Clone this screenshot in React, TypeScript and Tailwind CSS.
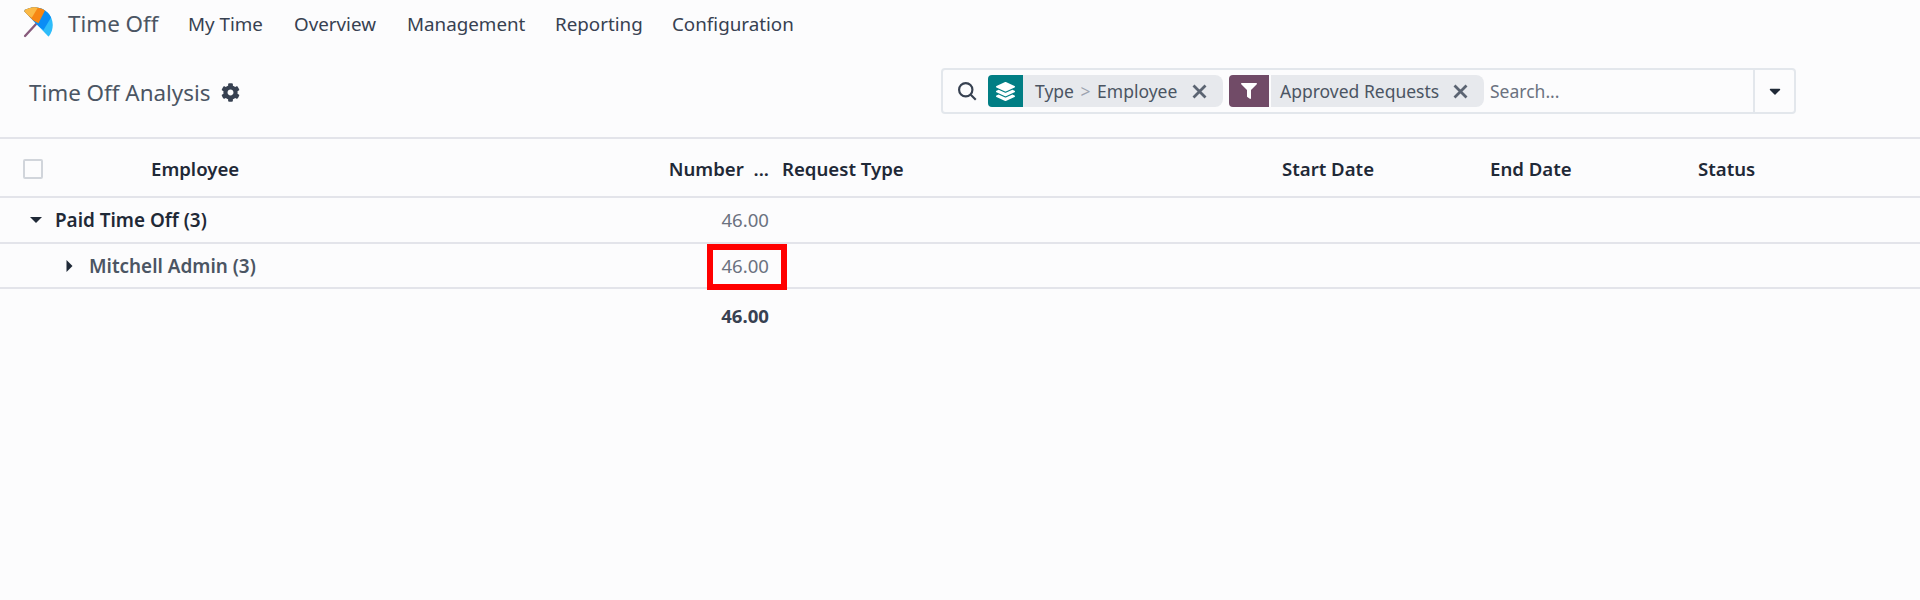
import { FaCog, FaFilter, FaLayerGroup, FaCaretDown } from "react-icons/fa";

const navItems = [
  { label: "My Time", width: "w-[106px]" },
  { label: "Overview", width: "w-[113px]" },
  { label: "Management", width: "w-[148px]" },
  { label: "Reporting", width: "w-[117px]" },
  { label: "Configuration", width: "w-[130px]" },
];

const Logo = () => (
  <svg width="37" height="37" viewBox="30 5 110 110" className="mt-[2px] shrink-0 self-start">
    <defs>
      <clipPath id="canopy">
        <path d="M42 32 A53 53 0 0 1 115 108 Z" />
      </clipPath>
    </defs>
    <path d="M82 66 L45 106" stroke="#875a7b" strokeWidth="7" strokeLinecap="round" />
    <g clipPath="url(#canopy)">
      <rect x="30" y="5" width="110" height="110" fill="#2ebcfa" />
      <path d="M30 5 H150 L100 88 L30 40 Z" fill="#0a8df5" />
      <path d="M30 5 H117 L85 68 L30 40 Z" fill="#f78613" />
      <path d="M30 5 H93 L65 52 L30 30 Z" fill="#fbb945" />
    </g>
  </svg>
);

const Caret = ({ dir }: { dir: "down" | "right" }) => (
  <svg width="12" height="12" viewBox="0 0 12 12" className="shrink-0" fill="#1f2937">
    {dir === "down" ? <path d="M0 3h12L6 9z" /> : <path d="M2.500 0v12L8.500 6z" />}
  </svg>
);

const CloseIcon = () => (
  <svg width="15" height="15" viewBox="0 0 15 15" stroke="#5b6472" strokeWidth="2.800">
    <path d="M1.500 1.500l12 12M13.500 1.500l-12 12" />
  </svg>
);

export default function App() {
  return (
    <div className="h-[600px] w-[1920px] overflow-hidden bg-[#fcfcfd] font-['Noto_Sans',sans-serif] text-[#374151]">
      {/* top nav */}
      <nav className="flex h-[48px] items-center pl-[20px]">
        <Logo />
        <span className="ml-[11px] w-[120px] text-[22.4px] text-[#4b5563]">Time Off</span>
        {navItems.map((item) => (
          <span key={item.label} className={`${item.width} text-[18.8px] text-[#374151]`}>
            {item.label}
          </span>
        ))}
      </nav>

      {/* control panel */}
      <div className="flex h-[91px] items-start border-b-2 border-[#e3e4ea] pl-[29px]">
        <div className="mt-[28px] flex w-[912px] items-center gap-[11px]">
          <span className="text-[22.4px] text-[#4b5563]">Time Off Analysis</span>
          <FaCog className="text-[19px] text-[#374151]" />
        </div>
        <div className="mt-[20px] flex h-[46px] w-[855px] items-center rounded border-2 border-[#e3e7ec] pl-[14px]">
          <svg width="20" height="20" viewBox="0 0 24 24" fill="none" stroke="#374151" strokeWidth="2.600">
            <circle cx="10.500" cy="10.500" r="8" />
            <path d="M16.500 16.500l6 6" />
          </svg>
          <div className="ml-[11px] flex flex-1 items-center gap-[6px]">
            <div className="flex h-[32px] w-[235px] items-stretch">
              <div className="flex w-[35px] items-center justify-center rounded-l bg-[#017e84]">
                <FaLayerGroup className="text-[19px] text-white" />
              </div>
              <div className="flex flex-1 items-center justify-between rounded-r-lg bg-[#e7e9ed] pl-[12px] pr-[16px] text-[17.5px] text-[#4b5563]">
                <span>
                  Type <span className="mx-[2px] text-[#9ca3af]">&gt;</span> Employee
                </span>
                <CloseIcon />
              </div>
            </div>
            <div className="flex h-[32px] w-[255px] items-stretch">
              <div className="mr-[2px] flex w-[40px] items-center justify-center rounded-l bg-[#714b67]">
                <FaFilter className="text-[16px] text-white" />
              </div>
              <div className="flex flex-1 items-center justify-between rounded-r-lg bg-[#e7e9ed] pl-[9px] pr-[16px] text-[17.5px] text-[#4b5563]">
                <span>Approved Requests</span>
                <CloseIcon />
              </div>
            </div>
            <span className="flex-1 text-[17.5px] text-[#6b7280]">Search...</span>
          </div>
          <div className="flex h-full w-[41px] items-center justify-center border-l-2 border-[#e3e7ec]">
            <FaCaretDown className="text-[18px] text-[#1f2937]" />
          </div>
        </div>
      </div>

      {/* list */}
      <div className="relative text-[18.6px]">
        <div className="flex h-[59px] items-center border-b-2 border-[#e3e4ea] pt-[3px] font-semibold text-[#1f2937]">
          <div className="w-[139px] pl-[23px]">
            <div className="h-[20px] w-[20px] rounded-[2px] border-2 border-[#d1d5db]" />
          </div>
          <div className="w-[500px] pl-[12px]">Employee</div>
          <div className="w-[130px] whitespace-nowrap text-right [word-spacing:5px]">Number ...</div>
          <div className="w-[501px] pl-[13px]">Request Type</div>
          <div className="w-[208px] pl-[12px]">Start Date</div>
          <div className="w-[208px] pl-[12px]">End Date</div>
          <div className="pl-[12px]">Status</div>
        </div>

        <div className="flex h-[46px] items-center border-b-2 border-[#e3e4ea]">
          <div className="flex w-[769px] items-center justify-between pl-[30px]">
            <div className="flex items-center gap-[13px] text-[18.9px] font-semibold text-[#1f2937]">
              <Caret dir="down" />
              Paid Time Off (3)
            </div>
            <span className="text-[#6b7280]">46.00</span>
          </div>
        </div>

        <div className="flex h-[45px] items-center border-b-2 border-[#e3e4ea] pt-[1px]">
          <div className="flex w-[769px] items-center justify-between pl-[64px]">
            <div className="flex items-center gap-[13px] text-[18.9px] font-semibold text-[#4b5563]">
              <Caret dir="right" />
              Mitchell Admin (3)
            </div>
            <span className="text-[#6b7280]">46.00</span>
          </div>
        </div>

        <div className="flex h-[54px] items-center">
          <div className="w-[769px] text-right font-bold text-[#374151]">46.00</div>
        </div>

        {/* red highlight drawn over the cell */}
        <div className="absolute left-[707px] top-[105px] h-[46px] w-[80px] border-[6px] border-[#ff0000]" />
      </div>
    </div>
  );
}
